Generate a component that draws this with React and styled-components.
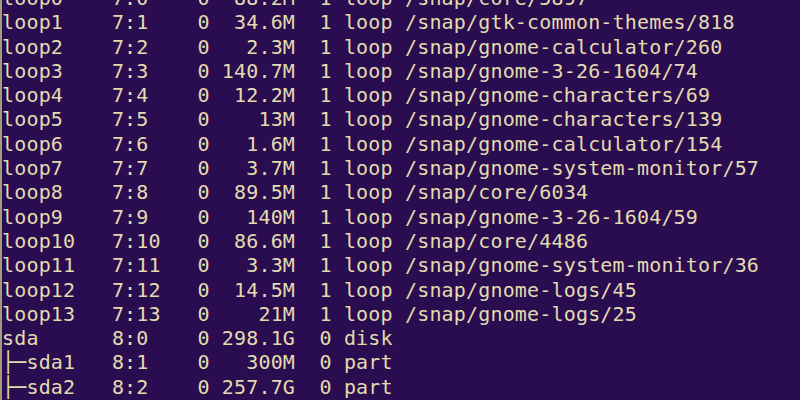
import { createGlobalStyle, styled } from "styled-components";

const GlobalStyle = createGlobalStyle`
  html, body {
    margin: 0;
    padding: 0;
    width: 800px;
    height: 400px;
    overflow: hidden;
    background: #2a0c50;
  }
`;

const Window = styled.div`
  width: 800px;
  height: 400px;
  overflow: hidden;
  background: #2a0c50;
  border-left: 2px solid #a39c7c;
  box-sizing: border-box;
`;

const Output = styled.div`
  margin-top: -14px;
  padding-left: 0;
  font-family: "DejaVu Sans Mono", "Liberation Mono", monospace;
  font-size: 20px;
  letter-spacing: 0.17px;
  line-height: 24.3px;
  color: #e2dbae;
`;

const Line = styled.div`
  white-space: pre;
`;

const devices = [
  ["loop0", "7:0", "0", "88.2M", "1", "loop", "/snap/core/5897"],
  ["loop1", "7:1", "0", "34.6M", "1", "loop", "/snap/gtk-common-themes/818"],
  ["loop2", "7:2", "0", "2.3M", "1", "loop", "/snap/gnome-calculator/260"],
  ["loop3", "7:3", "0", "140.7M", "1", "loop", "/snap/gnome-3-26-1604/74"],
  ["loop4", "7:4", "0", "12.2M", "1", "loop", "/snap/gnome-characters/69"],
  ["loop5", "7:5", "0", "13M", "1", "loop", "/snap/gnome-characters/139"],
  ["loop6", "7:6", "0", "1.6M", "1", "loop", "/snap/gnome-calculator/154"],
  ["loop7", "7:7", "0", "3.7M", "1", "loop", "/snap/gnome-system-monitor/57"],
  ["loop8", "7:8", "0", "89.5M", "1", "loop", "/snap/core/6034"],
  ["loop9", "7:9", "0", "140M", "1", "loop", "/snap/gnome-3-26-1604/59"],
  ["loop10", "7:10", "0", "86.6M", "1", "loop", "/snap/core/4486"],
  ["loop11", "7:11", "0", "3.3M", "1", "loop", "/snap/gnome-system-monitor/36"],
  ["loop12", "7:12", "0", "14.5M", "1", "loop", "/snap/gnome-logs/45"],
  ["loop13", "7:13", "0", "21M", "1", "loop", "/snap/gnome-logs/25"],
  ["sda", "8:0", "0", "298.1G", "0", "disk", ""],
  ["├─sda1", "8:1", "0", "300M", "0", "part", ""],
  ["├─sda2", "8:2", "0", "257.7G", "0", "part", ""],
];

function formatRow([name, majMin, rm, size, ro, type, mount]) {
  return (
    name.padEnd(9) +
    majMin.padEnd(7) +
    rm +
    size.padStart(7) +
    ro.padStart(3) +
    " " +
    type +
    (mount ? " " + mount : "")
  );
}

function App() {
  return (
    <>
      <GlobalStyle />
      <Window>
        <Output>
          {devices.map((d) => (
            <Line key={d[0]}>{formatRow(d)}</Line>
          ))}
        </Output>
      </Window>
    </>
  );
}

export default App;
